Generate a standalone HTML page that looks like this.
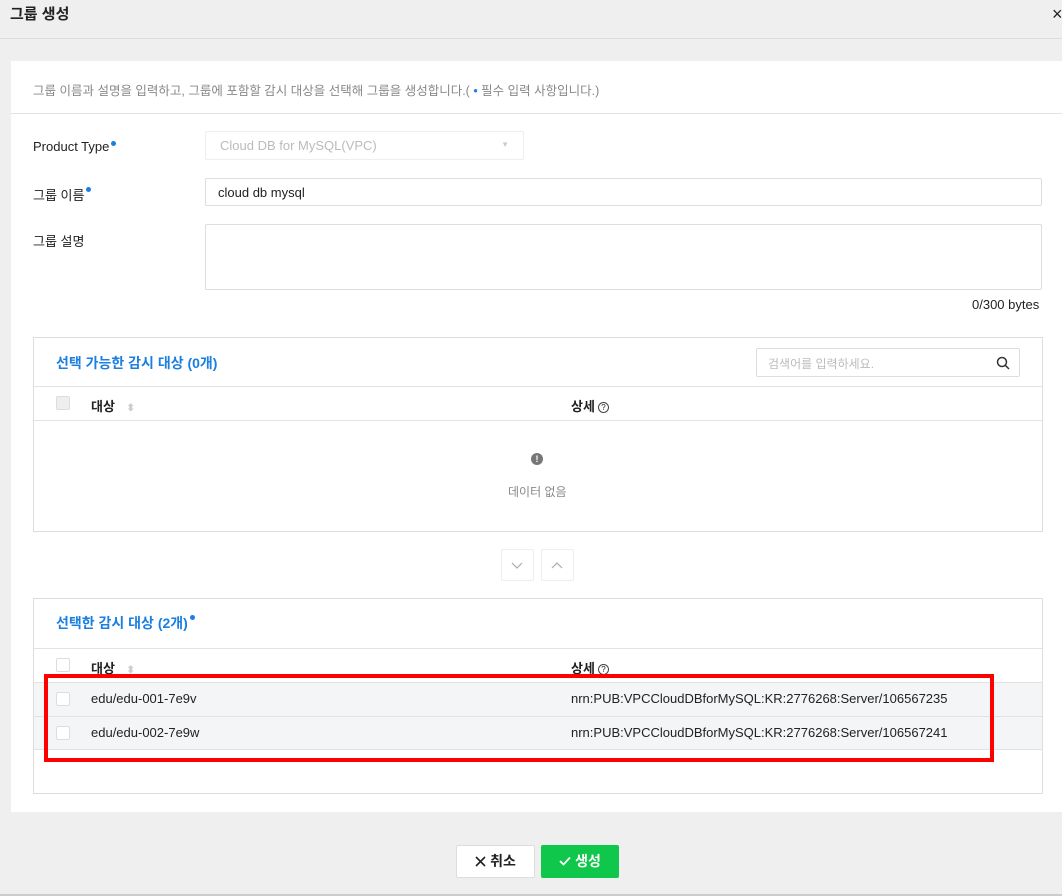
<!DOCTYPE html>
<html><head><meta charset="utf-8"><style>
*{box-sizing:border-box;margin:0;padding:0}
body{width:1062px;height:896px;background:#efefef;font-family:"Liberation Sans","Noto Sans CJK KR",sans-serif;font-size:13px;color:#222;position:relative;overflow:hidden}
.a{position:absolute}
.hdr{left:0;top:0;width:1062px;height:39px;border-bottom:1px solid #dcdcdc}
.panel{left:11px;top:61px;width:1051px;height:751px;background:#fff}
.box{border:1px solid #ddd;background:#fff}
.cb{width:14px;height:14px;border:1px solid #ddd;border-radius:2px;background:#fff}
.line{height:1px;background:#e2e2e2}
.blue{color:#1a7fe0;font-weight:bold;font-size:14px}
.dot{display:inline-block;width:5px;height:5px;border-radius:50%;background:#1a7fe0;vertical-align:top;margin-left:2px;margin-top:2px}
.input{border:1px solid #ddd;border-radius:2px;background:#fff}
.q{display:inline-block;width:11px;height:11px;border:1px solid #444;border-radius:50%;font-size:8px;line-height:9px;text-align:center;font-weight:normal;vertical-align:1px;margin-left:3px}
</style></head><body>
<div class="a hdr"></div>
<div class="a" style="left:10px;top:3px;font-size:15px;font-weight:bold">그룹 생성</div>
<div class="a" style="left:1052px;top:4px;font-size:18px">×</div>
<div class="a panel"></div>
<div class="a" style="left:33px;top:80px;font-size:12.5px;color:#888">그룹 이름과 설명을 입력하고, 그룹에 포함할 감시 대상을 선택해 그룹을 생성합니다.( <span style="color:#1a7fe0">•</span> 필수 입력 사항입니다.)</div>
<div class="a line" style="left:11px;top:113px;width:1051px"></div>

<div class="a" style="left:33px;top:139px">Product Type<span class="dot"></span></div>
<div class="a input" style="left:205px;top:131px;width:319px;height:29px;border-color:#eee;color:#bbb;padding:6px 14px">Cloud DB for MySQL(VPC)<span style="position:absolute;right:14px;top:8px;font-size:8px;color:#ccc">▼</span></div>
<div class="a" style="left:33px;top:185px">그룹 이름<span class="dot"></span></div>
<div class="a input" style="left:205px;top:178px;width:837px;height:28px;padding:6px 12px">cloud db mysql</div>
<div class="a" style="left:33px;top:231px">그룹 설명</div>
<div class="a input" style="left:205px;top:224px;width:837px;height:66px"></div>
<div class="a" style="left:972px;top:297px;font-size:13px">0/300 bytes</div>

<div class="a box" style="left:33px;top:337px;width:1010px;height:195px"></div>
<div class="a blue" style="left:56px;top:353px">선택 가능한 감시 대상 (0개)</div>
<div class="a input" style="left:756px;top:348px;width:264px;height:29px;color:#bbb;padding:6px 11px;font-size:12px">검색어를 입력하세요.
<svg style="position:absolute;right:9px;top:7px" width="14" height="14" viewBox="0 0 14 14"><circle cx="6" cy="6" r="4.5" fill="none" stroke="#333" stroke-width="1.5"/><path d="M9.3 9.3L13 13" stroke="#333" stroke-width="1.5"/></svg></div>
<div class="a line" style="left:34px;top:386px;width:1008px"></div>
<div class="a cb" style="left:56px;top:396px;background:#eee"></div>
<div class="a" style="left:91px;top:396px;font-weight:bold">대상 <span style="color:#ccc;font-size:10px;margin-left:8px">⬍</span></div>
<div class="a" style="left:571px;top:396px;font-weight:bold">상세<span class="q">?</span></div>
<div class="a line" style="left:34px;top:420px;width:1008px"></div>
<div class="a" style="left:531px;top:453px;width:12px;height:12px;border-radius:50%;background:#777;color:#fff;font-size:9px;text-align:center;line-height:12px;font-weight:bold">!</div>
<div class="a" style="left:508px;top:483px;color:#888;font-size:12px">데이터 없음</div>

<div class="a input" style="left:501px;top:549px;width:33px;height:32px;border-color:#eee"><svg width="31" height="30"><path d="M10 13l5 5 5-5" fill="none" stroke="#aaa" stroke-width="1.2"/></svg></div>
<div class="a input" style="left:541px;top:549px;width:33px;height:32px;border-color:#eee"><svg width="31" height="30"><path d="M10 18l5-5 5 5" fill="none" stroke="#aaa" stroke-width="1.2"/></svg></div>

<div class="a box" style="left:33px;top:598px;width:1010px;height:196px"></div>
<div class="a blue" style="left:56px;top:613px">선택한 감시 대상 (2개)<span class="dot"></span></div>
<div class="a line" style="left:34px;top:648px;width:1008px"></div>
<div class="a cb" style="left:56px;top:658px"></div>
<div class="a" style="left:91px;top:658px;font-weight:bold">대상 <span style="color:#ccc;font-size:10px;margin-left:8px">⬍</span></div>
<div class="a" style="left:571px;top:658px;font-weight:bold">상세<span class="q">?</span></div>
<div class="a" style="left:34px;top:682px;width:1008px;height:68px;background:#f4f5f7;border-top:1px solid #e2e2e2;border-bottom:1px solid #e2e2e2"></div>
<div class="a line" style="left:34px;top:716px;width:1008px"></div>
<div class="a cb" style="left:56px;top:692px"></div>
<div class="a" style="left:91px;top:691px">edu/edu-001-7e9v</div>
<div class="a" style="left:571px;top:691px">nrn:PUB:VPCCloudDBforMySQL:KR:2776268:Server/106567235</div>
<div class="a cb" style="left:56px;top:726px"></div>
<div class="a" style="left:91px;top:725px">edu/edu-002-7e9w</div>
<div class="a" style="left:571px;top:725px">nrn:PUB:VPCCloudDBforMySQL:KR:2776268:Server/106567241</div>
<div class="a" style="left:44px;top:674px;width:950px;height:88px;border:4px solid #f00"></div>

<div class="a" style="left:456px;top:845px;width:79px;height:33px;background:#fff;border:1px solid #ddd;border-radius:2px;text-align:center;line-height:31px;font-weight:bold;font-size:14px"><svg width="11" height="11" style="vertical-align:-1px;margin-right:4px"><path d="M1 1L10 10M10 1L1 10" stroke="#222" stroke-width="1.6"/></svg>취소</div>
<div class="a" style="left:541px;top:845px;width:78px;height:33px;background:#0fc74a;border-radius:2px;text-align:center;line-height:33px;font-weight:bold;font-size:14px;color:#fff"><svg width="12" height="10" style="vertical-align:0;margin-right:4px"><path d="M1 5l3.5 3.5L11 1.5" fill="none" stroke="#fff" stroke-width="1.8"/></svg>생성</div>
<div class="a" style="left:0;top:894px;width:1062px;height:2px;background:#ccc"></div>
</body></html>
